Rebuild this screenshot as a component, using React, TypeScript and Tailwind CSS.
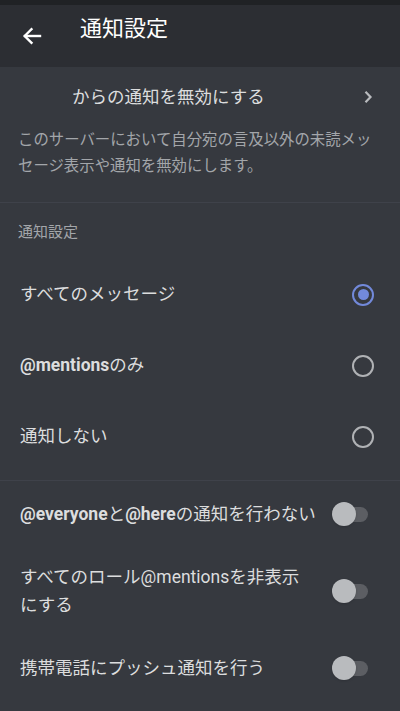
import React, { useState } from 'react';

const font = { fontFamily: 'Roboto, "Noto Sans CJK JP", sans-serif' };

const BackArrow = () => (
  <svg width="20" height="18" viewBox="0 0 20 18" fill="none" stroke="#ffffff" strokeWidth="2.4" strokeLinecap="square">
    <path d="M18 9H3" />
    <path d="M9.5 2.2L2.7 9l6.8 6.8" />
  </svg>
);

const Chevron = () => (
  <svg width="10" height="14" viewBox="0 0 10 14" fill="none" stroke="#b9bbbe" strokeWidth="2.2">
    <path d="M2.5 1.8L7.5 7l-5 5.2" />
  </svg>
);

const Radio = ({ checked }: { checked: boolean }) => (
  <div
    className={`w-[22px] h-[22px] rounded-full border-[2.5px] flex items-center justify-center ${
      checked ? 'border-[#7289da]' : 'border-[#b0b2b5]'
    }`}
  >
    {checked && <div className="w-[11px] h-[11px] rounded-full bg-[#7289da]" />}
  </div>
);

const Toggle = () => (
  <div className="relative w-[36px] h-[24px] flex items-center">
    <div className="w-full h-[15px] rounded-full bg-[#5c5e63] ml-[2px]" />
    <div className="absolute left-0 top-0 w-[24px] h-[24px] rounded-full bg-[#b9bbbe] shadow" />
  </div>
);

const App: React.FC = () => {
  const [level, setLevel] = useState(0);
  const options = [
    <>すべてのメッセージ</>,
    <><span className="font-bold">@mentions</span>のみ</>,
    <>通知しない</>,
  ];

  return (
    <div className="w-[400px] h-[711px] bg-[#36393f] overflow-hidden text-[#dcddde]" style={font}>
      <div className="h-[5px] bg-[#202225]" />

      {/* Header */}
      <div className="h-[62px] bg-[#2c2e33] flex">
        <div className="w-[80px] flex items-center pl-[22px]">
          <BackArrow />
        </div>
        <h1 className="pt-[9px] text-[22px] leading-[30px] text-white">通知設定</h1>
      </div>

      {/* Mute server */}
      <div className="h-[60px] flex items-center justify-between pl-[72px] pr-[27px]">
        <span className="text-[17.5px]">からの通知を無効にする</span>
        <Chevron />
      </div>
      <p className="px-[18px] pb-[23px] text-[15.4px] leading-[26px] text-[#a3a6aa]">
        このサーバーにおいて自分宛の言及以外の未読メッセージ表示や通知を無効にします。
      </p>
      <div className="h-px bg-[#3f424a]" />

      {/* Notification level */}
      <div className="pt-[19px] px-[18px] text-[15px] leading-[20px] text-[#a3a6aa]">通知設定</div>
      <div className="mt-[17px]">
        {options.map((label, i) => (
          <div
            key={i}
            onClick={() => setLevel(i)}
            className="h-[71px] flex items-center justify-between pl-[20px] pr-[26px] cursor-pointer"
          >
            <span className="text-[17.5px]">{label}</span>
            <Radio checked={level === i} />
          </div>
        ))}
      </div>
      <div className="mt-[8px] h-px bg-[#3f424a]" />

      {/* Toggles */}
      <div className="h-[66px] flex items-center justify-between pl-[20px] pr-[32px]">
        <span className="text-[17.5px]">
          <span className="font-bold">@everyone</span>と<span className="font-bold">@here</span>の通知を行わない
        </span>
        <Toggle />
      </div>
      <div className="h-[88px] flex items-center justify-between pl-[20px] pr-[32px]">
        <span className="text-[17.5px] leading-[28px] w-[285px]">すべてのロール@mentionsを非表示にする</span>
        <Toggle />
      </div>
      <div className="h-[66px] flex items-center justify-between pl-[20px] pr-[32px]">
        <span className="text-[17.5px]">携帯電話にプッシュ通知を行う</span>
        <Toggle />
      </div>
    </div>
  );
};

export default App;
